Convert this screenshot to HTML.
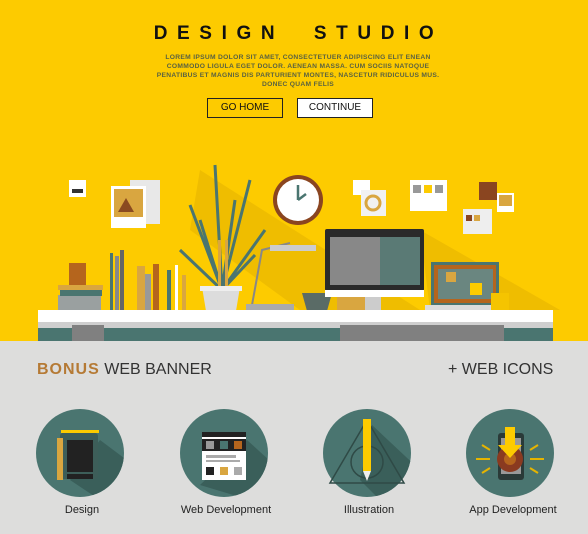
<!DOCTYPE html>
<html><head><meta charset="utf-8"><style>
*{margin:0;padding:0;box-sizing:border-box}
body{width:588px;height:534px;overflow:hidden;background:#dddddc;font-family:"Liberation Sans",sans-serif;position:relative}
.top{position:absolute;left:0;top:0;width:588px;height:341px;background:#fdcb00}
.h1{position:absolute;left:0;width:588px;top:23px;text-align:center;font-weight:bold;font-size:19px;letter-spacing:9.6px;color:#111;padding-left:9px;white-space:nowrap}
.p{position:absolute;left:100px;width:396px;top:53px;text-align:center;font-weight:bold;font-size:6.7px;line-height:9px;color:#5a6240;letter-spacing:.3px;white-space:nowrap}
.btn{position:absolute;top:98px;height:20px;width:76px;border:1.5px solid #222;font-size:10px;text-align:center;line-height:17px;color:#111}
.ab{position:absolute}
.t{position:absolute;font-size:16px;color:#333;top:361px}
.lab{position:absolute;top:504px;font-size:11px;color:#222;text-align:center;width:140px}
</style></head><body>
<div class="top"></div>
<div class="h1">DESIGN&nbsp;&nbsp;STUDIO</div>
<div class="p">LOREM IPSUM DOLOR SIT AMET, CONSECTETUER ADIPISCING ELIT ENEAN<br>COMMODO LIGULA EGET DOLOR. AENEAN MASSA. CUM SOCIIS NATOQUE<br>PENATIBUS ET MAGNIS DIS PARTURIENT MONTES, NASCETUR RIDICULUS MUS.<br>DONEC QUAM FELIS</div>
<div class="btn" style="left:207px">GO HOME</div>
<div class="btn" style="left:297px;background:#fff">CONTINUE</div>

<svg class="ab" style="left:0;top:150px" width="588" height="192" viewBox="0 150 588 192">
<polygon points="200,170 420,310 300,310 190,230" fill="#e6b400" opacity=".6"/>
<polygon points="420,230 560,310 430,310" fill="#e6b400" opacity=".6"/>
<rect x="69" y="180" width="17" height="17" fill="#fff"/><rect x="72" y="189" width="11" height="4" fill="#333"/>
<rect x="130" y="180" width="30" height="44" fill="#e8e8e8"/>
<rect x="111" y="186" width="35" height="42" fill="#fff"/><rect x="114" y="189" width="29" height="28" fill="#d9a640"/>
<polygon points="118,212 126,198 134,212" fill="#8a4a20"/>
<circle cx="298" cy="200" r="25" fill="#8a4520"/><circle cx="298" cy="200" r="21" fill="#fff"/>
<path d="M298 200V185M298 200l8-6" stroke="#4a7570" stroke-width="2.5"/>
<rect x="353" y="180" width="17" height="15" fill="#fff"/>
<rect x="361" y="190" width="25" height="26" fill="#f1f1f1"/><circle cx="373" cy="203" r="7" fill="none" stroke="#d9a640" stroke-width="3"/>
<rect x="410" y="180" width="37" height="31" fill="#fff"/><rect x="413" y="185" width="8" height="8" fill="#999"/><rect x="424" y="185" width="8" height="8" fill="#fdcb00"/><rect x="435" y="185" width="8" height="8" fill="#999"/>
<rect x="463" y="209" width="29" height="25" fill="#eee"/><rect x="466" y="215" width="6" height="6" fill="#8a4520"/><rect x="474" y="215" width="6" height="6" fill="#d9a640"/>
<rect x="479" y="182" width="18" height="18" fill="#8a4520"/><rect x="497" y="193" width="17" height="19" fill="#fff"/><rect x="499" y="195" width="13" height="11" fill="#d9a640"/>
<g stroke="#4a7570" stroke-width="3" fill="none">
<path d="M222 290L190 205M222 290L215 165M222 290L250 180M222 290L265 230M222 290L180 250M222 290L235 200M222 290L200 220M222 290L255 255"/></g>
<rect x="218" y="240" width="3" height="50" fill="#d9a640"/><rect x="225" y="240" width="3" height="50" fill="#d9a640"/>
<path d="M202 287h38l-4 24h-30z" fill="#dcdcdc"/><rect x="200" y="286" width="42" height="5" fill="#eee"/>
<path d="M252 305L262 250 290 243" stroke="#888" stroke-width="2" fill="none"/><rect x="270" y="245" width="46" height="6" fill="#ccc"/>
<rect x="246" y="304" width="48" height="6" fill="#aaa"/>
<rect x="58" y="295" width="43" height="16" fill="#9aa0a0"/><rect x="60" y="289" width="42" height="7" fill="#4a7570"/><rect x="58" y="285" width="45" height="5" fill="#d9a640"/>
<rect x="69" y="263" width="17" height="22" fill="#b5651d"/>
<rect x="110" y="253" width="3" height="58" fill="#4a7570"/><rect x="115" y="256" width="4" height="55" fill="#888"/><rect x="120" y="250" width="4" height="61" fill="#666"/>
<rect x="137" y="266" width="8" height="45" fill="#d9a640"/><rect x="145" y="274" width="6" height="37" fill="#999"/><rect x="153" y="264" width="6" height="47" fill="#b5651d"/><rect x="159" y="272" width="6" height="39" fill="#fdcb00"/><rect x="167" y="270" width="4" height="41" fill="#4a7570"/><rect x="175" y="265" width="3" height="46" fill="#fff"/><rect x="182" y="275" width="4" height="36" fill="#d9a640"/>
<path d="M302 293h30l-5 18h-20z" fill="#5a6b66"/>
<rect x="337" y="289" width="34" height="22" fill="#d9a640"/><rect x="334" y="275" width="22" height="20" fill="#fff"/>
<rect x="325" y="229" width="99" height="62" fill="#2a2a2a" rx="2"/><rect x="330" y="237" width="90" height="48" fill="#888"/><rect x="380" y="237" width="40" height="48" fill="#5a7a75"/>
<rect x="325" y="290" width="99" height="7" fill="#fff"/><rect x="365" y="297" width="16" height="13" fill="#ccc"/>
<rect x="431" y="262" width="68" height="44" fill="#4a7570"/><rect x="434" y="265" width="62" height="38" fill="#b5651d"/>
<rect x="438" y="269" width="55" height="30" fill="#6a8680"/><rect x="446" y="272" width="10" height="10" fill="#d9a640"/><rect x="470" y="283" width="12" height="12" fill="#fdcb00"/>
<rect x="425" y="305" width="80" height="5" fill="#dcdcdc"/>
<path d="M491 293h18v17h-18z" fill="#f5c400"/>
<rect x="38" y="310" width="515" height="12" fill="#fff"/>
<rect x="38" y="322" width="515" height="6" fill="#cfcfcf"/>
<rect x="38" y="328" width="515" height="13" fill="#4a7570"/>
<rect x="72" y="325" width="32" height="16" fill="#808080"/>
<rect x="340" y="325" width="164" height="16" fill="#808080"/>
</svg>

<div class="t" style="left:37px"><b style="color:#b57a35;letter-spacing:1px">BONUS</b> WEB BANNER</div>
<div class="t" style="left:448px">+ WEB ICONS</div>

<svg class="ab" style="left:0;top:405px" width="588" height="100" viewBox="0 405 588 100">
<defs><clipPath id="c1"><circle cx="80" cy="453" r="44"/></clipPath><clipPath id="c2"><circle cx="224" cy="453" r="44"/></clipPath><clipPath id="c3"><circle cx="367" cy="453" r="44"/></clipPath><clipPath id="c4"><circle cx="510" cy="453" r="44"/></clipPath></defs>
<circle cx="80" cy="453" r="44" fill="#4a7570"/><circle cx="224" cy="453" r="44" fill="#4a7570"/><circle cx="367" cy="453" r="44" fill="#4a7570"/><circle cx="510" cy="453" r="44" fill="#4a7570"/>
<polygon points="100,440 140,470 100,500 70,480" fill="#3a5f5a" clip-path="url(#c1)"/>
<polygon points="247,440 280,470 250,500 200,485" fill="#3a5f5a" clip-path="url(#c2)"/>
<polygon points="372,425 420,470 380,500 360,480" fill="#3a5f5a" clip-path="url(#c3)"/>
<rect x="60" y="433" width="38" height="46" rx="3" fill="#3d5e59"/><rect x="67" y="440" width="26" height="32" fill="#222"/>
<rect x="67" y="474" width="26" height="5" fill="#222"/>
<rect x="57" y="438" width="6" height="42" fill="#d9a640"/>
<rect x="61" y="430" width="38" height="3" fill="#fdcb00"/>
<rect x="202" y="432" width="44" height="48" fill="#fff"/><rect x="202" y="432" width="44" height="5" fill="#222"/><rect x="202" y="439" width="44" height="12" fill="#222"/>
<rect x="206" y="441" width="8" height="8" fill="#999"/><rect x="220" y="441" width="8" height="8" fill="#4a7570"/><rect x="234" y="441" width="8" height="8" fill="#b5651d"/>
<rect x="206" y="455" width="30" height="3" fill="#aaa"/><rect x="206" y="460" width="34" height="2" fill="#aaa"/>
<rect x="206" y="467" width="8" height="8" fill="#222"/><rect x="220" y="467" width="8" height="8" fill="#d9a640"/><rect x="234" y="467" width="8" height="8" fill="#aaa"/>
<polygon points="367,420 404,483 330,483" fill="none" stroke="#2f4a46" stroke-width="1.5"/>
<circle cx="367" cy="462" r="16" fill="none" stroke="#2f4a46" stroke-width="1.5"/>
<rect x="363" y="419" width="8" height="52" fill="#fdcb00"/><polygon points="363,471 371,471 367,481" fill="#eee"/>
<rect x="498" y="433" width="26" height="47" rx="3" fill="#2a3a38"/><rect x="501" y="438" width="20" height="36" fill="#999"/>
<circle cx="510" cy="459" r="13" fill="#8a3a20"/><circle cx="510" cy="459" r="6" fill="#b5651d"/>
<rect x="505" y="427" width="10" height="20" fill="#fdcb00"/><polygon points="498,445 522,445 510,458" fill="#fdcb00"/>
<g stroke="#e6b400" stroke-width="2"><path d="M476 459h14M530 459h14M482 445l8 5M538 445l-8 5M482 473l8-5M538 473l-8-5"/></g>
</svg>
<div class="lab" style="left:12px">Design</div>
<div class="lab" style="left:156px">Web Development</div>
<div class="lab" style="left:299px">Illustration</div>
<div class="lab" style="left:443px">App Development</div>
</body></html>
